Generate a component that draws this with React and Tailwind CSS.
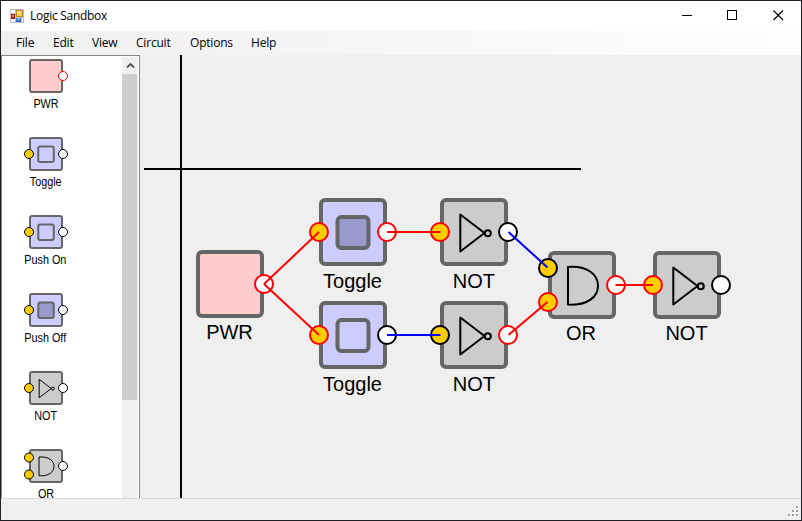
import React from 'react';

const UI_FONT = "font-['Open_Sans','Noto_Sans',sans-serif]";
const LABEL_FONT = "font-['Liberation_Sans',Arial,sans-serif]";

const FILLS = {
  power: '#ffcccc',
  toggle: '#ccccff',
  pressed: '#ccccff',
  not: '#cccccc',
  or: '#cccccc',
};

// A component drawn in a 92x72 box: the body spans x 12-80, y 2-70.
function Gate({ kind, inputs = [], output = 'black', className }) {
  const ys = inputs.length === 2 ? [19, 53] : [36];
  return (
    <svg viewBox="0 0 92 72" className={className}>
      <rect x="14" y="4" width="64" height="64" rx="4" fill={FILLS[kind]} stroke="#666" strokeWidth="4" />
      {(kind === 'toggle' || kind === 'pressed') && (
        <rect x="30.5" y="21" width="31" height="31" rx="4" fill={kind === 'pressed' ? '#9999cc' : '#ccccff'} stroke="#666" strokeWidth="4" />
      )}
      {kind === 'not' && (
        <g fill="none" stroke="#000" strokeWidth="2" strokeLinejoin="round">
          <path d="M32.300 18.500V55.500L56.500 37Z" />
          <circle cx="59.800" cy="37.200" r="3" />
        </g>
      )}
      {kind === 'or' && (
        <path d="M32 18C52 16.500 62 26 62 36.700S52 57 32 55.500Z" fill="none" stroke="#000" strokeWidth="2" strokeLinejoin="round" />
      )}
      {inputs.map((c, i) => (
        <circle key={i} cx="12" cy={ys[i]} r="9" fill="#ffcc00" stroke={c} strokeWidth="2" />
      ))}
      <circle cx="80" cy="36" r="9" fill="#fff" stroke={output} strokeWidth="2" />
    </svg>
  );
}

const palette = [
  { label: 'PWR', kind: 'power', output: 'red' },
  { label: 'Toggle', kind: 'toggle', inputs: ['black'] },
  { label: 'Push On', kind: 'toggle', inputs: ['black'] },
  { label: 'Push Off', kind: 'pressed', inputs: ['black'] },
  { label: 'NOT', kind: 'not', inputs: ['black'] },
  { label: 'OR', kind: 'or', inputs: ['black', 'black'] },
];

// Positions are the body's top-left corner on the canvas.
const nodes = [
  { label: 'PWR', kind: 'power', x: 56, y: 195, output: 'red', raised: true },
  { label: 'Toggle', kind: 'pressed', x: 179, y: 143, inputs: ['red'], output: 'red' },
  { label: 'Toggle', kind: 'toggle', x: 179, y: 246, inputs: ['red'] },
  { label: 'NOT', kind: 'not', x: 300.4, y: 143, inputs: ['red'] },
  { label: 'NOT', kind: 'not', x: 300.4, y: 246, inputs: ['black'], output: 'red' },
  { label: 'OR', kind: 'or', x: 407.5, y: 196, inputs: ['black', 'red'], output: 'red', raised: true },
  { label: 'NOT', kind: 'not', x: 513, y: 196, inputs: ['red'], raised: true },
];

const wires = [
  ['red', 'M124 229L179 177'],
  ['red', 'M124 229L179 280'],
  ['red', 'M247 177H300.500'],
  ['blue', 'M247 280H300.500'],
  ['blue', 'M368.500 177L407.500 212.500'],
  ['red', 'M368.500 280L407.500 247'],
  ['red', 'M475.500 230H513'],
];

const menu = [
  ['File', 'w-[37px]'],
  ['Edit', 'w-[39px]'],
  ['View', 'w-11'],
  ['Circuit', 'w-[54px]'],
  ['Options', 'w-[61px]'],
  ['Help', 'w-10'],
];

function AppIcon() {
  return (
    <svg width="14" height="14" viewBox="0 0 14 14" shapeRendering="crispEdges">
      <rect width="14" height="14" fill="#b9bcc1" />
      <path d="M1 1h4v3H1zM1 10h4v3H1zM12 9h1v4h-1z" fill="#fff" />
      <rect x="1" y="5" width="4" height="5" fill="#a51d16" />
      <rect x="2" y="6" width="2" height="2" fill="#ef8a78" />
      <rect x="6" y="1" width="7" height="7" fill="#c58a12" />
      <rect x="7" y="2" width="5" height="5" fill="#ffd34f" />
      <rect x="7" y="2" width="3" height="2" fill="#fff0a8" />
      <rect x="6" y="9" width="5" height="4" fill="#3a70cf" />
      <rect x="7" y="9" width="3" height="2" fill="#86b4f4" />
    </svg>
  );
}

function TitleBar() {
  return (
    <header className="flex h-[30px] shrink-0 items-center bg-white pl-[9px]">
      <AppIcon />
      <span className="ml-1.5 flex-1 text-[12px] leading-4 tracking-[-0.28px]">Logic Sandbox</span>
      <svg width="138" height="30" viewBox="0 0 138 30" fill="none" stroke="#000">
        <path d="M19 14.500h10M64.500 9.500h9v9h-9z" shapeRendering="crispEdges" />
        <path d="M110.500 9.500l9.500 9.500M120 9.500l-9.500 9.500" strokeWidth="1.1" />
      </svg>
    </header>
  );
}

function Sidebar() {
  return (
    <aside className="flex w-[139px] shrink-0 border border-b-0 border-[#828790] bg-white">
      <ul className="min-w-0 flex-1 overflow-hidden pt-0.5">
        {palette.map((p) => (
          <li key={p.label} className="flex h-[78px] w-[88px] flex-col items-center">
            <Gate kind={p.kind} inputs={p.inputs} output={p.output} className="h-9 w-[46px] shrink-0" />
            <span className="mt-[3px] -ml-px origin-center scale-x-[0.9] text-[12px] leading-[14px] whitespace-nowrap">{p.label}</span>
          </li>
        ))}
      </ul>
      <div className="mt-px mr-px flex w-4 flex-col bg-[#f0f0f0]">
        <div className="flex h-[17px] items-center justify-center">
          <svg width="9" height="7" viewBox="0 0 9 7" fill="none" stroke="#505050" strokeWidth="1.8">
            <path d="M1 5.500l3.500-3.500l3.500 3.500" />
          </svg>
        </div>
        <div className="h-[326px] w-[15px] bg-[#cdcdcd]" />
      </div>
    </aside>
  );
}

function Canvas() {
  return (
    <main className="relative flex-1 overflow-hidden bg-[#efefef]">
      <div className="absolute top-0 left-10 h-full w-0.5 bg-black" />
      <div className="absolute top-[113px] left-1 h-0.5 w-[437px] bg-black" />
      {nodes.map((n, i) => (
        <div
          key={i}
          className="absolute flex w-[92px] flex-col items-center"
          style={{ left: n.x - 12, top: n.y - 2 }}
        >
          <Gate kind={n.kind} inputs={n.inputs} output={n.output} className="h-[72px] w-[92px] shrink-0" />
          <span className={`-ml-px text-[20px] leading-6 ${n.raised ? 'mt-0' : 'mt-px'}`}>{n.label}</span>
        </div>
      ))}
      <svg className="absolute inset-0 h-full w-full" fill="none" strokeWidth="2">
        {wires.map(([color, d]) => (
          <path key={d} d={d} stroke={color} />
        ))}
      </svg>
    </main>
  );
}

function StatusBar() {
  return (
    <footer className="flex h-[22px] shrink-0 items-end justify-end border-t border-[#d7d7d7] bg-[#f0f0f0] pr-0.5 pb-[3px]">
      <svg width="11" height="11" viewBox="0 0 11 11" shapeRendering="crispEdges">
        {[[8, 0], [4, 4], [8, 4], [0, 8], [4, 8], [8, 8]].map(([x, y]) => (
          <g key={`${x}-${y}`}>
            <rect x={x + 1} y={y + 1} width="2" height="2" fill="#fff" />
            <rect x={x} y={y} width="2" height="2" fill="#a0a0a0" />
          </g>
        ))}
      </svg>
    </footer>
  );
}

export default function App() {
  return (
    <div className={`flex h-[521px] w-[802px] flex-col overflow-hidden border border-[#202024] bg-[#f0f0f0] text-black ${UI_FONT}`}>
      <TitleBar />
      <nav className="flex h-6 shrink-0 items-center bg-linear-to-r from-[#f0f0f0] to-[#fdfdfd] pl-[15px] text-[12px] leading-4 tracking-[-0.2px]">
        {menu.map(([name, width]) => (
          <span key={name} className={width}>{name}</span>
        ))}
      </nav>
      <div className={`flex min-h-0 flex-1 ${LABEL_FONT}`}>
        <Sidebar />
        <Canvas />
      </div>
      <StatusBar />
    </div>
  );
}
